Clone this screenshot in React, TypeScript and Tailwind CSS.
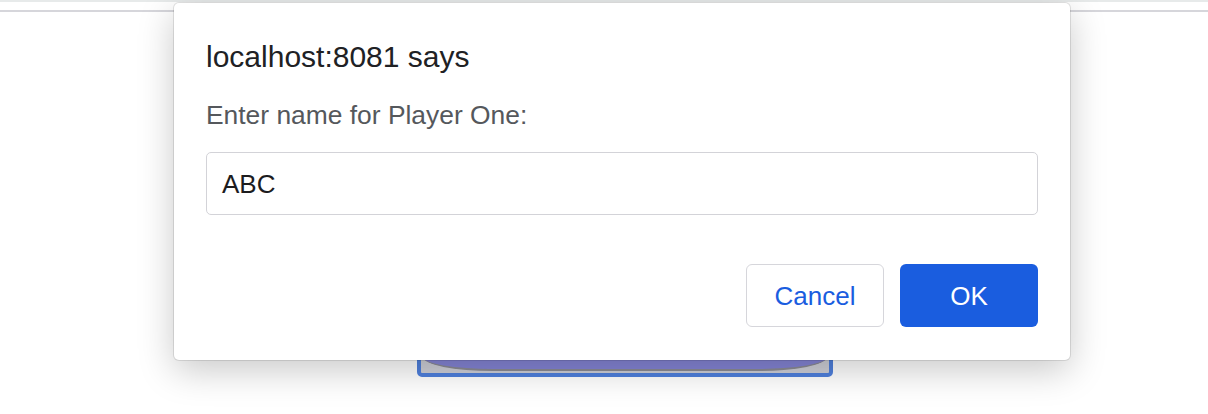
export default function App() {
  return (
    <div
      className="relative h-[414px] w-full overflow-hidden bg-white"
      style={{ fontFamily: "'Liberation Sans', Arial, sans-serif" }}
    >
      {/* page underneath */}
      <div className="h-[2px] bg-[#e7eaea]" />
      <div className="mt-[8px] h-[2px] bg-[#d6d6db]" />
      <div className="ml-[417px] mt-[305px] h-[60px] w-[416px] rounded-[5px] border-[4px] border-[#4f80dd] bg-[#cfd0d8] p-[2px]">
        <div className="h-full rounded-b-[70px_14px] border-b-2 border-[#8c8c94] bg-[#8585d6]" />
      </div>

      {/* prompt dialog */}
      <div className="absolute left-[174px] top-[3px] flex h-[357px] w-[896px] flex-col rounded-[5px] bg-white px-8 pt-9 shadow-[0_10px_36px_rgba(0,0,0,0.22),0_0_0_1px_rgba(0,0,0,0.1)]">
        <p className="text-[30px] leading-[36px] text-[#202124]">localhost:8081 says</p>
        <p className="mt-6 text-[26.4px] leading-[32px] text-[#55585c]">Enter name for Player One:</p>
        <div className="mt-[21px] flex h-[63px] items-center rounded-[5px] border border-[#d3d3d8] pl-[15px] text-[26px] leading-[32px] text-[#1c1c1e]">
          ABC
        </div>
        <div className="mt-[49px] flex justify-end gap-4">
          <button className="h-[63px] w-[138px] rounded-[6px] border border-[#d6d6db] bg-white text-[26px] leading-[32px] text-[#1a5ddf]">
            Cancel
          </button>
          <button className="h-[63px] w-[138px] rounded-[6px] bg-[#1a5ddf] text-[26px] leading-[32px] text-white">
            OK
          </button>
        </div>
      </div>
    </div>
  );
}
